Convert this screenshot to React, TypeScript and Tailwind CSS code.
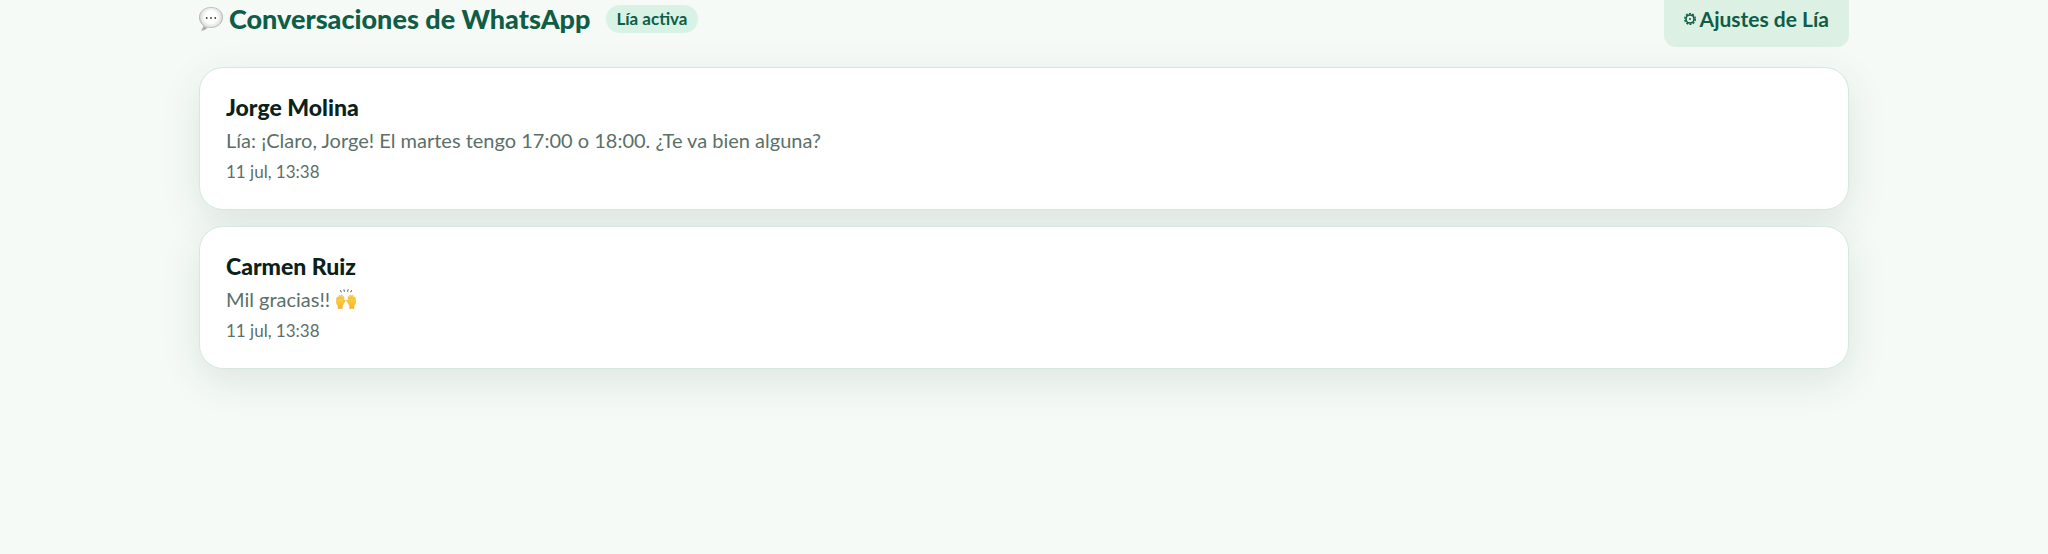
interface Conversation {
  id: string;
  name: string;
  lastMessage: string;
  raisedHands?: boolean;
  date: string;
}

const conversations: Conversation[] = [
  {
    id: "jorge",
    name: "Jorge Molina",
    lastMessage: "Lía: ¡Claro, Jorge! El martes tengo 17:00 o 18:00. ¿Te va bien alguna?",
    date: "11 jul, 13:38",
  },
  {
    id: "carmen",
    name: "Carmen Ruiz",
    lastMessage: "Mil gracias!!",
    raisedHands: true,
    date: "11 jul, 13:38",
  },
];

const SpeechBubble = () => (
  <svg className="w-6 h-6 shrink-0" viewBox="0 0 24 24" aria-hidden="true">
    <defs>
      <radialGradient id="bubble" cx="0.5" cy="0.42" r="0.58">
        <stop offset="0.45" stopColor="#ffffff" />
        <stop offset="0.75" stopColor="#e2e2e2" />
        <stop offset="1" stopColor="#9c9c9c" />
      </radialGradient>
    </defs>
    <path
      d="M12 .4C5.400.4.4 4.700.4 10.300c0 3.600 1.700 6.500 4.300 8.300-.1 1.800-.9 3.400-2.200 4.700 2.800-.2 4.900-1.400 6.200-3.200 1 .3 2.200.4 3.300.4 6.600 0 11.600-4.500 11.600-10.200S18.600.4 12 .4z"
      fill="url(#bubble)"
      stroke="#b4b6b4"
      strokeWidth="0.8"
    />
    <circle cx="7.700" cy="11" r="0.9" fill="#3c3c3c" />
    <circle cx="12" cy="11" r="0.9" fill="#3c3c3c" />
    <circle cx="16.300" cy="11" r="0.9" fill="#3c3c3c" />
  </svg>
);

const Gear = () => (
  <svg className="w-3 h-3 shrink-0" viewBox="0 0 12 12" fill="none" stroke="currentColor" aria-hidden="true">
    <circle cx="6" cy="6" r="4" strokeWidth="1.600" />
    <circle cx="6" cy="6" r="5.300" strokeWidth="1.400" strokeDasharray="1.960 1.370" />
    <circle cx="6" cy="6" r="1" fill="currentColor" stroke="none" />
  </svg>
);

const RaisedHands = () => (
  <svg className="w-5 h-5 shrink-0" viewBox="0 0 20 20" role="img" aria-label="Manos levantadas">
    <defs>
      <linearGradient id="hand" x1="0" y1="0" x2="0" y2="1">
        <stop offset="0" stopColor="#ffd84a" />
        <stop offset="1" stopColor="#f9b51e" />
      </linearGradient>
    </defs>
    <g stroke="#4a4a4a" strokeWidth="1" strokeLinecap="round">
      <path d="M4.500 1.600l.7 1.300M8 .8l.3 1.500M12 .8l-.3 1.500M15.500 1.600l-.7 1.300" />
    </g>
    <g fill="url(#hand)" stroke="#e79a16" strokeWidth="0.4" transform="translate(0 2.600) scale(1 .87)">
      <path d="M2 19.500l.1-3.400C.9 14.800.2 13 .4 10.800L.8 6.900c.1-.9 1.200-.9 1.300 0l.2 1.800.6-4c.2-.9 1.300-.8 1.300.1l0 3.300.9-3.800c.3-.8 1.300-.6 1.300.3l-.5 4.200 1-2.700c.4-.7 1.300-.4 1.200.4l-.7 4c.6-.7 1.500-1 2-.5.3.4 0 .8-.4 1.200-1 1.100-1.300 3.600-2.700 5l.1 3.300z" />
      <path d="M18 19.500l-.1-3.400c1.200-1.300 1.900-3.100 1.700-5.300l-.4-3.900c-.1-.9-1.200-.9-1.300 0l-.2 1.800-.6-4c-.2-.9-1.300-.8-1.300.1l0 3.300-.9-3.800c-.3-.8-1.300-.6-1.300.3l.5 4.200-1-2.700c-.4-.7-1.300-.4-1.200.4l.7 4c-.6-.7-1.500-1-2-.5-.3.4 0 .8.4 1.200 1 1.100 1.300 3.600 2.700 5l-.1 3.300z" />
    </g>
  </svg>
);

const App = () => {
  return (
    <div className="flow-root min-h-screen bg-[#f5faf6] px-6 font-['Lato',sans-serif] text-[#0b2119]">
      <main className="mx-auto max-w-[1650px]">
        <header className="-mt-[9px] flex items-center justify-between pb-5">
          <div className="flex items-center gap-4">
            <h1 className="flex items-center gap-1.5 text-[27px] leading-8 font-black text-[#0f5c47]">
              <SpeechBubble />
              Conversaciones de WhatsApp
            </h1>
            <span className="rounded-full bg-[#d8f3e5] px-2.5 text-[17px] leading-7 font-bold text-[#0f5c47]">
              Lía activa
            </span>
          </div>
          <button className="flex h-14 items-center gap-1 rounded-xl bg-[#dcf0e3] px-5 text-[21px] font-bold text-[#0f5c47]">
            <Gear />
            Ajustes de Lía
          </button>
        </header>

        <ul className="flex flex-col gap-4">
          {conversations.map((c) => (
            <li
              key={c.id}
              className="rounded-3xl border border-[#d6e8e1] bg-white px-[26px] py-6 shadow-[0_12px_40px_rgba(15,60,48,0.1)]"
            >
              <h2 className="text-[23px] leading-[30px] font-black">{c.name}</h2>
              <p className="flex items-center gap-1.5 text-xl leading-9 text-[#5b7068]">
                {c.lastMessage}
                {c.raisedHands && <RaisedHands />}
              </p>
              <p className="text-[17px] leading-[27px] text-[#5b7068]">{c.date}</p>
            </li>
          ))}
        </ul>
      </main>
    </div>
  );
};

export default App;
